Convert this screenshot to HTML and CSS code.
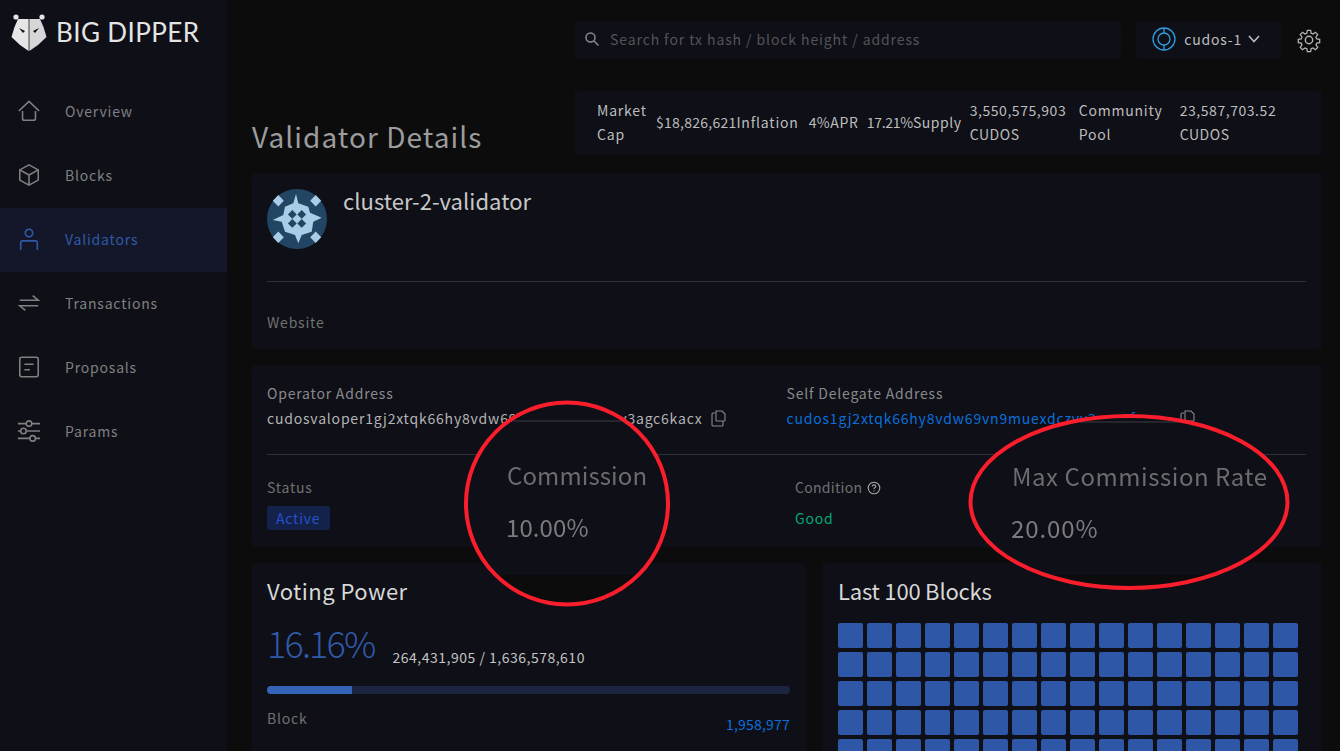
FILE: index.html
```html
<!DOCTYPE html>
<html lang="en">
<head>
  <meta charset="UTF-8">
  <meta name="viewport" content="width=device-width, initial-scale=1.0">
  <title>Validator Details</title>
  <link rel="stylesheet" href="styles.css">
</head>
<body>

  <aside class="sidebar">
    <div class="logo">
      <svg class="logo-mark" width="36" height="40" viewBox="0 0 36 40">
        <circle cx="5" cy="5" r="2.6" fill="#e6e6e6"/>
        <circle cx="31" cy="5" r="2.6" fill="#e6e6e6"/>
        <path d="M7 7 L17.6 7 L17.6 39 L9 33 L0.5 25 L3.5 15 Z" fill="#e6e6e6"/>
        <path d="M29 7 L18.4 7 L18.4 39 L27 33 L35.5 25 L32.5 15 Z" fill="#d6d6d6"/>
        <path d="M8 16 L14 19 L12 21 Z M28 16 L22 19 L24 21 Z" fill="#0e0f17"/>
      </svg>
      <span class="logo-text">BIG DIPPER</span>
    </div>
    <nav class="nav">
      <a class="nav-item">
        <svg class="nav-icon" viewBox="0 0 26 26"><path d="M2 13 L13 2.5 L24 13 M6 13 V21 Q6 23 8 23 H18 Q20 23 20 21 V13"/></svg>
        Overview
      </a>
      <a class="nav-item">
        <svg class="nav-icon" viewBox="0 0 26 26"><path d="M13 2 L23 7.5 V18.5 L13 24 L3 18.5 V7.5 Z M3 7.5 L13 13 L23 7.5 M13 13 V24"/></svg>
        Blocks
      </a>
      <a class="nav-item active">
        <svg class="nav-icon" viewBox="0 0 26 26"><circle cx="13" cy="6.5" r="4"/><path d="M4 25 V17 Q4 15 6 15 H20 Q22 15 22 17 V25"/></svg>
        Validators
      </a>
      <a class="nav-item">
        <svg class="nav-icon" viewBox="0 0 26 26"><path d="M3 10 H23 L17 5 M23 16 H3 L9 21"/></svg>
        Transactions
      </a>
      <a class="nav-item">
        <svg class="nav-icon" viewBox="0 0 26 26"><rect x="3" y="2.5" width="20" height="21" rx="2"/><path d="M8 10 H18 M8 16 H14"/></svg>
        Proposals
      </a>
      <a class="nav-item">
        <svg class="nav-icon" viewBox="0 0 26 26"><path d="M1 5 H10 M16 5 H25 M1 13 H4 M10 13 H25 M1 21 H14 M20 21 H25"/><circle cx="13" cy="5" r="3"/><circle cx="7" cy="13" r="3"/><circle cx="17" cy="21" r="3"/></svg>
        Params
      </a>
    </nav>
  </aside>

  <main class="content">
    <header class="topbar">
      <div class="search">
        <svg width="16" height="16" viewBox="0 0 16 16" fill="none" stroke="#8a8a8e" stroke-width="1.5"><circle cx="6.5" cy="6.5" r="4.5"/><path d="M10 10 L14.5 14.5"/></svg>
        <span>Search for tx hash / block height / address</span>
      </div>
      <div class="network">
        <svg width="24" height="24" viewBox="0 0 24 24" fill="none" stroke="#2f9fe0" stroke-width="1.3"><circle cx="12" cy="12" r="11"/><circle cx="12" cy="12" r="6"/><path d="M12 1 V6 M12 18 V23"/></svg>
        <span>cudos-1</span>
        <svg class="chevron" width="12" height="8" viewBox="0 0 12 8" fill="none" stroke="#bdbdbd" stroke-width="1.6"><path d="M1 1 L6 6.5 L11 1"/></svg>
      </div>
      <svg class="gear" width="26" height="26" viewBox="0 0 24 24" fill="none" stroke="#b4b4b4" stroke-width="1.3"><circle cx="12" cy="12" r="3.4"/><path d="M10.3 2 h3.4 l.5 3 1.9 .8 2.5-1.8 2.4 2.4-1.8 2.5 .8 1.9 3 .5 v3.4 l-3 .5-.8 1.9 1.8 2.5-2.4 2.4-2.5-1.8-1.9 .8-.5 3 h-3.4 l-.5-3-1.9-.8-2.5 1.8-2.4-2.4 1.8-2.5-.8-1.9-3-.5 v-3.4 l3-.5 .8-1.9-1.8-2.5 2.4-2.4 2.5 1.8 1.9-.8 z" transform="translate(1.2 1.2) scale(.9)"/></svg>
    </header>

    <div class="title-row">
      <h1 class="page-title">Validator Details</h1>
      <div class="stats">
        <div class="stat"><span class="stat-label market">Market Cap</span><span class="price">$18,826,621</span></div>
        <div class="stat"><span>Inflation</span><span class="inflation">4%</span></div>
        <div class="stat"><span>APR</span><span class="apr">17.21%</span></div>
        <div class="stat"><span class="supply-label">Supply</span><span class="stat-value supply">3,550,575,903 CUDOS</span></div>
        <div class="stat pool"><span class="stat-label community">Community Pool</span><span class="stat-value">23,587,703.52 CUDOS</span></div>
      </div>
    </div>

    <section class="card profile">
      <div class="profile-head">
        <svg class="avatar" width="60" height="60" viewBox="0 0 60 60">
          <circle cx="30" cy="30" r="30" fill="#234564"/>
          <g fill="#a9cde6">
            <path d="M29 5 L31.300 14.300 L41.300 17.700 L43 23.700 L54.700 28.700 L46.300 32.700 L44.700 42.700 L34.700 46 L31.300 54.300 L28 46 L18 42.700 L14.700 32.700 L5.700 31 L16.300 26 L18 17.700 L26.300 14.300 Z"/>
            <path d="M11.300 6 l5.500 5.700 -5.500 5.700 -5.500 -5.700 z M48.700 6 l5.500 5.700 -5.500 5.700 -5.500 -5.700 z M11.300 42.600 l5.500 5.700 -5.500 5.700 -5.500 -5.700 z M48.700 42.600 l5.500 5.700 -5.500 5.700 -5.500 -5.700 z"/>
          </g>
          <path d="M25.300 21 l4.400 4.400 -4.400 4.400 -4.400 -4.400 z M34.700 21 l4.400 4.400 -4.400 4.400 -4.400 -4.400 z M25.300 30 l4.400 4.400 -4.400 4.400 -4.400 -4.400 z M34.700 30 l4.400 4.400 -4.400 4.400 -4.400 -4.400 z" fill="#234564"/>
        </svg>
        <h2 class="validator-name">cluster-2-validator</h2>
      </div>
      <div class="divider"></div>
      <div class="muted">Website</div>
    </section>

    <section class="card addresses">
      <div class="address-row">
        <div class="address-col">
          <div class="field-label">Operator Address</div>
          <div class="address">
            <span>cudosvaloper1gj2xtqk66hy8vdw69</span><span class="address-gap"></span><span>v3agc6kacx</span>
            <svg class="copy" width="15" height="17" viewBox="0 0 15 17" fill="none" stroke="#8a8a8a" stroke-width="1.1"><path d="M4 3 H2 Q1 3 1 4 V15 Q1 16 2 16 H11 Q12 16 12 15 V11 M5 1 H11 L14 4 V10 Q14 11 13 11 H6 Q5 11 5 10 Z"/></svg>
          </div>
        </div>
        <div class="address-col">
          <div class="field-label">Self Delegate Address</div>
          <div class="address">
            <a class="link">cudos1gj2xtqk66hy8vdw69vn9muexdczyv3agc9fxqm</a>
            <svg class="copy" width="15" height="17" viewBox="0 0 15 17" fill="none" stroke="#8a8a8a" stroke-width="1.1"><path d="M4 3 H2 Q1 3 1 4 V15 Q1 16 2 16 H11 Q12 16 12 15 V11 M5 1 H11 L14 4 V10 Q14 11 13 11 H6 Q5 11 5 10 Z"/></svg>
          </div>
        </div>
      </div>
      <div class="divider"></div>
      <div class="status-row">
        <div class="status-col">
          <div class="muted">Status</div>
          <span class="badge">Active</span>
        </div>
        <div class="status-col condition">
          <div class="muted">Condition
            <svg class="help" width="14" height="14" viewBox="0 0 14 14" fill="none" stroke="#a8a8a8" stroke-width="1.1"><circle cx="7" cy="7" r="5.8"/><path d="M5.200 5.600 Q5.200 3.900 7 3.900 Q8.800 3.900 8.800 5.400 Q8.800 6.300 7.800 6.800 Q7 7.200 7 8.200 M7 9.400 V10.400"/></svg>
          </div>
          <span class="good">Good</span>
        </div>
      </div>
    </section>

    <div class="bottom-row">
      <section class="card voting">
        <h3 class="card-title">Voting Power</h3>
        <div class="power">
          <span class="power-pct">16.16%</span>
          <span class="power-count">264,431,905 / 1,636,578,610</span>
        </div>
        <div class="progress"><div class="progress-fill" style="width: 16.16%"></div></div>
        <div class="block-row">
          <span class="muted">Block</span>
          <a class="block-link">1,958,977</a>
        </div>
      </section>
      <section class="card blocks">
        <h3 class="card-title">Last 100 Blocks</h3>
        <div class="block-grid" id="blockGrid"></div>
      </section>
    </div>
  </main>

  <!-- pasted-over annotations from the screenshot -->
  <svg class="marks" width="1340" height="751" viewBox="0 0 1340 751">
    <defs>
      <clipPath id="patchClip"><rect x="0" y="0" width="1340" height="575"/></clipPath>
    </defs>
    <ellipse cx="567" cy="503.500" rx="101" ry="101" fill="#0c0c0d"/>
    <ellipse cx="1129" cy="502" rx="158.500" ry="86" fill="#0c0c0d"/>
    <g clip-path="url(#patchClip)">
      <ellipse cx="567" cy="503.500" rx="101" ry="101" fill="#0e0f17"/>
      <ellipse cx="1129" cy="502" rx="158.500" ry="86" fill="#0e0f17"/>
    </g>
    <rect x="513" y="420" width="110" height="2" fill="#25262c"/>
    <rect x="1080" y="421" width="100" height="2" fill="#25262c"/>
    <ellipse cx="567" cy="503.500" rx="101" ry="101" fill="none" stroke="#fa1e2d" stroke-width="4"/>
    <ellipse cx="1129" cy="502" rx="158.500" ry="86" fill="none" stroke="#fa1e2d" stroke-width="4"/>
  </svg>
  <div class="pasted commission-label">Commission</div>
  <div class="pasted commission-value">10.00%</div>
  <div class="pasted max-label">Max Commission Rate</div>
  <div class="pasted max-value">20.00%</div>

  <script>
    const grid = document.getElementById('blockGrid');
    for (let i = 0; i < 80; i++) {
      const cell = document.createElement('div');
      cell.className = 'block-cell';
      grid.appendChild(cell);
    }
  </script>

</body>
</html>
```

FILE: styles.css
```css
* {
  box-sizing: border-box;
}
body {
  display: flex;
  margin: 0;
  height: 100vh;
  overflow: hidden;
  background: #0c0c0d;
  color: #bdbdbd;
  font-family: "Noto Sans CJK TC", "Noto Sans", sans-serif;
  font-size: 14px;
  letter-spacing: 0.8px;
  font-variant-numeric: proportional-nums;
}
h1, h2, h3 {
  margin: 0;
  font-weight: 400;
}

/* sidebar */
.sidebar {
  width: 227px;
  flex-shrink: 0;
  background: #0e0f17;
}
.logo {
  display: flex;
  align-items: center;
  height: 80px;
  padding: 0 0 16px 11px;
}
.logo-mark {
  margin-right: 9px;
}
.logo-text {
  font-family: Lato, sans-serif;
  font-size: 26px;
  letter-spacing: 0.4px;
  color: #e4e4e4;
}
.nav-item {
  display: flex;
  align-items: center;
  height: 64px;
  padding: 0 0 2px 17px;
  color: #808080;
}
.nav-item.active {
  background: #131729;
  color: #2f5aa8;
}
.nav-icon {
  width: 24px;
  height: 24px;
  margin-right: 24px;
  fill: none;
  stroke: currentColor;
  stroke-width: 1.7;
}

/* main column */
.content {
  flex: 1;
  min-width: 0;
  padding: 21px 18px 0 25px;
}
.topbar {
  display: flex;
  align-items: center;
  height: 38px;
  margin-left: 322px;
}
.search {
  display: flex;
  align-items: center;
  gap: 10px;
  width: 548px;
  height: 38px;
  padding: 0 0 2px 10px;
  background: #0e0f17;
  border-radius: 4px;
  color: #545458;
  letter-spacing: 0.9px;
}
.network {
  display: flex;
  align-items: center;
  gap: 8px;
  width: 146px;
  height: 37px;
  margin-left: 15px;
  padding: 0 0 2px 16px;
  background: #0e0f17;
  border-radius: 4px;
}
.chevron {
  margin-left: -2px;
}
.gear {
  margin-left: 14px;
}
.title-row {
  display: flex;
  justify-content: space-between;
  align-items: flex-end;
  margin-top: 32px;
}
.page-title {
  font-size: 28px;
  line-height: 38px;
  letter-spacing: 1.05px;
  color: #9c9c9c;
}
.stats {
  display: flex;
  align-items: center;
  width: 748px;
  height: 64px;
  padding: 0 0 2px 23px;
  background: #0e0f17;
  border-radius: 4px;
  line-height: 24px;
}
.stat {
  display: flex;
  align-items: center;
  gap: 8px;
}
.stat-label.market {
  width: 51px;
}
.price {
  letter-spacing: 0.25px;
}
.inflation {
  margin-left: 2px;
  letter-spacing: 0.4px;
}
.apr {
  letter-spacing: -0.3px;
}
.supply-label {
  letter-spacing: 0.55px;
}
.stat.pool {
  margin-left: 9px;
  gap: 17px;
}
.stat-label.community {
  width: 84px;
}
.stat .stat-value {
  width: 100px;
  letter-spacing: 0.55px;
}

/* cards */
.card {
  background: #0e0f17;
  border-radius: 4px;
  padding: 16px 16px 16px 15px;
}
.divider {
  height: 1px;
  background: #2f3036;
}
.muted {
  color: #717171;
}
.profile {
  height: 176px;
  margin-top: 18px;
}
.profile-head {
  display: flex;
  gap: 16px;
  height: 92px;
}
.validator-name {
  font-size: 22px;
  line-height: 22px;
  color: #c8c8c8;
  letter-spacing: 0.05px;
}
.profile .muted {
  margin-top: 30px;
  line-height: 20px;
}
.addresses {
  height: 182px;
  margin-top: 16px;
  padding-top: 19px;
}
.address-row {
  display: flex;
  height: 70px;
}
.address-col {
  width: 520px;
}
.field-label {
  line-height: 18px;
  color: #8a8a8a;
}
.address {
  display: flex;
  align-items: center;
  margin-top: 6px;
  line-height: 20px;
  color: #b4b4b4;
}
.address-gap {
  width: 102px;
}
.link {
  color: #0b70dc;
}
.copy {
  margin-left: 8px;
}
.link + .copy {
  margin-left: 14px;
}
.status-row {
  display: flex;
  margin-top: 23px;
}
.status-col {
  width: 528px;
  flex-shrink: 0;
}
.status-col .muted {
  line-height: 18px;
}
.condition .muted {
  letter-spacing: 0.3px;
}
.help {
  vertical-align: -2px;
  margin-left: 1px;
}
.badge {
  display: inline-block;
  margin-top: 10px;
  padding: 0 10px 0 9px;
  line-height: 24px;
  background: #14214a;
  border-radius: 3px;
  color: #2452c8;
}
.good {
  display: inline-block;
  margin-top: 10px;
  line-height: 24px;
  color: #06a878;
}
.bottom-row {
  display: flex;
  gap: 16px;
  margin-top: 16px;
}
.voting {
  width: 554px;
  height: 220px;
}
.blocks {
  width: 500px;
  height: 220px;
  padding-left: 16px;
}
.blocks .card-title {
  letter-spacing: -0.2px;
}
.card-title {
  font-size: 22px;
  line-height: 22px;
  color: #d8d8d8;
  letter-spacing: 0.45px;
}
.power {
  display: flex;
  align-items: flex-end;
  gap: 18px;
  margin-top: 17px;
}
.power-pct {
  font-size: 36px;
  line-height: 48px;
  font-weight: 300;
  color: #2f5aa8;
  letter-spacing: -1.8px;
}
.power-count {
  line-height: 20px;
  margin-bottom: -1px;
  color: #c4c4c4;
  letter-spacing: 0.5px;
}
.progress {
  height: 8px;
  margin-top: 20px;
  background: #1b2542;
  border-radius: 4px;
  overflow: hidden;
}
.progress-fill {
  height: 100%;
  background: #3563b8;
}
.block-row {
  display: flex;
  justify-content: space-between;
  margin-top: 14px;
}
.block-link {
  margin-top: 6px;
  color: #0b70dc;
  letter-spacing: 0.2px;
}
.block-grid {
  display: grid;
  grid-template-columns: repeat(16, 25px);
  grid-auto-rows: 25px;
  gap: 4px;
  margin-top: 22px;
}
.block-cell {
  background: #2e57a7;
  border-radius: 2px;
}

/* red rings and the blurred text pasted inside them */
.marks {
  position: absolute;
  left: 0;
  top: 0;
  pointer-events: none;
}
.pasted {
  position: absolute;
  font-size: 24px;
  line-height: 32px;
  color: #6c6c70;
  filter: blur(0.7px);
}
.commission-label {
  left: 507px;
  top: 459px;
  letter-spacing: 0.1px;
}
.commission-value {
  left: 506px;
  top: 511px;
  color: #7c7c80;
  letter-spacing: 0.1px;
}
.max-label {
  left: 1012px;
  top: 460px;
  letter-spacing: 0.55px;
}
.max-value {
  left: 1011px;
  top: 512px;
  color: #7c7c80;
  letter-spacing: 0.9px;
}
```
